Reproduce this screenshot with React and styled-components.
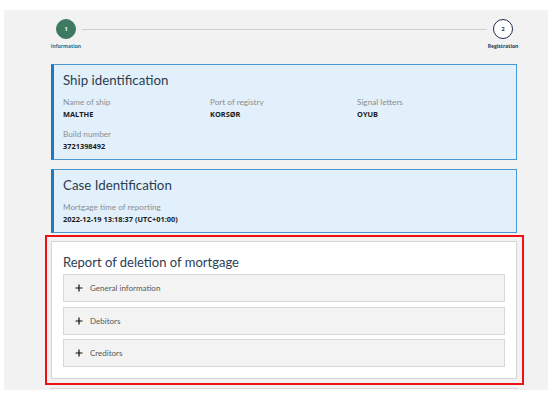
import React from "react";
import styled, { createGlobalStyle } from "styled-components";

const Global = createGlobalStyle`
  html, body { margin: 0; padding: 0; background: #ffffff; }
  body { font-family: "Open Sans", "Liberation Sans", sans-serif; }
  * { box-sizing: border-box; }
`;

const Page = styled.div`
  width: 560px;
  height: 399px;
  padding: 10px 12px 0 4px;
  overflow: hidden;
`;

const Shell = styled.div`
  background: #f2f2f2;
  height: 380px;
  overflow: hidden;
  padding: 0 31px 0 47px;
`;

const Stepper = styled.div`
  display: flex;
  align-items: flex-start;
  height: 54px;
  padding-top: 9px;
  margin: 0 -11px 0 -10px;
`;

const Step = styled.div`
  display: flex;
  flex-direction: column;
  align-items: center;
  width: 50px;
  flex: none;
`;

const Circle = styled.div`
  width: 20px;
  height: 20px;
  border-radius: 50%;
  display: flex;
  align-items: center;
  justify-content: center;
  font-size: 5.5px;
  font-weight: 700;
  background: ${(p) => (p.$active ? "#3e7a62" : "#ffffff")};
  color: ${(p) => (p.$active ? "#ffffff" : "#1f2d4a")};
  border: 1px solid ${(p) => (p.$active ? "#3e7a62" : "#1f2d4a")};
`;

const StepLabel = styled.div`
  margin-top: 4px;
  font-size: 5px;
  font-weight: 700;
  color: ${(p) => (p.$active ? "#2d6f8a" : "#2b3850")};
  white-space: nowrap;
`;

const Line = styled.div`
  flex: 1;
  height: 1px;
  background: #cfcfcf;
  margin-top: 10px;
  margin-left: -9px;
  margin-right: -9px;
`;

const Stack = styled.div`
  display: flex;
  flex-direction: column;
  gap: 8.5px;
`;

const InfoCard = styled.section`
  background: #e1f0fa;
  border: 1px solid #4a98d3;
  border-left: 3px solid #1f77bc;
  padding: 5px 10px 7px 9px;
`;

const CardTitle = styled.h2`
  margin: 0 0 6px 0;
  font-family: "Lato", "Open Sans", sans-serif;
  font-weight: 400;
  font-size: 13.3px;
  line-height: 20px;
  color: #2b3d52;
`;

const FieldGrid = styled.div`
  display: grid;
  grid-template-columns: 147px 147px 1fr;
  row-gap: 8px;
`;

const Field = styled.div`
  display: flex;
  flex-direction: column;
`;

const Label = styled.div`
  font-family: "Lato", "Open Sans", sans-serif;
  font-size: 8.2px;
  line-height: 12px;
  color: #8e8e8e;
`;

const Value = styled.div`
  font-size: 7.4px;
  line-height: 12px;
  font-weight: 700;
  color: #1b1b1b;
`;

const Highlight = styled.div`
  position: relative;
  &::after {
    content: "";
    position: absolute;
    top: -6px;
    left: -6px;
    right: -7px;
    bottom: -6px;
    border: 2px solid #ee1111;
    pointer-events: none;
  }
`;

const PlainCard = styled.section`
  background: #ffffff;
  border: 1px solid #d6d6d6;
  padding: 8px 11px 11px 11px;
  min-height: ${(p) => p.$minH || "auto"};
`;

const ReportTitle = styled.h2`
  margin: 0;
  font-family: "Lato", "Open Sans", sans-serif;
  font-weight: 400;
  font-size: 13px;
  line-height: 24px;
  color: #2b3d52;
`;

const Accordion = styled.div`
  display: flex;
  flex-direction: column;
  gap: 4.5px;
`;

const AccItem = styled.div`
  height: 28px;
  background: #f3f3f3;
  border: 1px solid #d8d8d8;
  display: flex;
  align-items: center;
  padding-left: 11px;
  gap: 7px;
`;

const PlusIcon = styled.svg`
  width: 8px;
  height: 8px;
  flex: none;
`;

const AccText = styled.span`
  font-family: "Lato", "Open Sans", sans-serif;
  font-size: 8px;
  color: #56585a;
`;

function Plus() {
  return (
    <PlusIcon viewBox="0 0 8 8">
      <path d="M4 0.5V7.5M0.5 4H7.5" stroke="#111" strokeWidth="1.2" fill="none" />
    </PlusIcon>
  );
}

export default function App() {
  return (
    <>
      <Global />
      <Page>
        <Shell>
          <Stepper>
            <Step>
              <Circle $active>1</Circle>
              <StepLabel $active>Information</StepLabel>
            </Step>
            <Line />
            <Step>
              <Circle>2</Circle>
              <StepLabel>Registration</StepLabel>
            </Step>
          </Stepper>
          <Stack>
            <InfoCard>
              <CardTitle>Ship identification</CardTitle>
              <FieldGrid>
                <Field>
                  <Label>Name of ship</Label>
                  <Value>MALTHE</Value>
                </Field>
                <Field>
                  <Label>Port of registry</Label>
                  <Value>KORSØR</Value>
                </Field>
                <Field>
                  <Label>Signal letters</Label>
                  <Value>OYUB</Value>
                </Field>
                <Field>
                  <Label>Build number</Label>
                  <Value>3721398492</Value>
                </Field>
              </FieldGrid>
            </InfoCard>
            <InfoCard>
              <CardTitle>Case Identification</CardTitle>
              <FieldGrid>
                <Field>
                  <Label>Mortgage time of reporting</Label>
                  <Value>2022-12-19 13:18:37 (UTC+01:00)</Value>
                </Field>
              </FieldGrid>
            </InfoCard>
            <Highlight>
              <PlainCard>
                <ReportTitle>Report of deletion of mortgage</ReportTitle>
                <Accordion>
                  <AccItem>
                    <Plus />
                    <AccText>General information</AccText>
                  </AccItem>
                  <AccItem>
                    <Plus />
                    <AccText>Debitors</AccText>
                  </AccItem>
                  <AccItem>
                    <Plus />
                    <AccText>Creditors</AccText>
                  </AccItem>
                </Accordion>
              </PlainCard>
            </Highlight>
            <PlainCard $minH="40px" />
          </Stack>
        </Shell>
      </Page>
    </>
  );
}
